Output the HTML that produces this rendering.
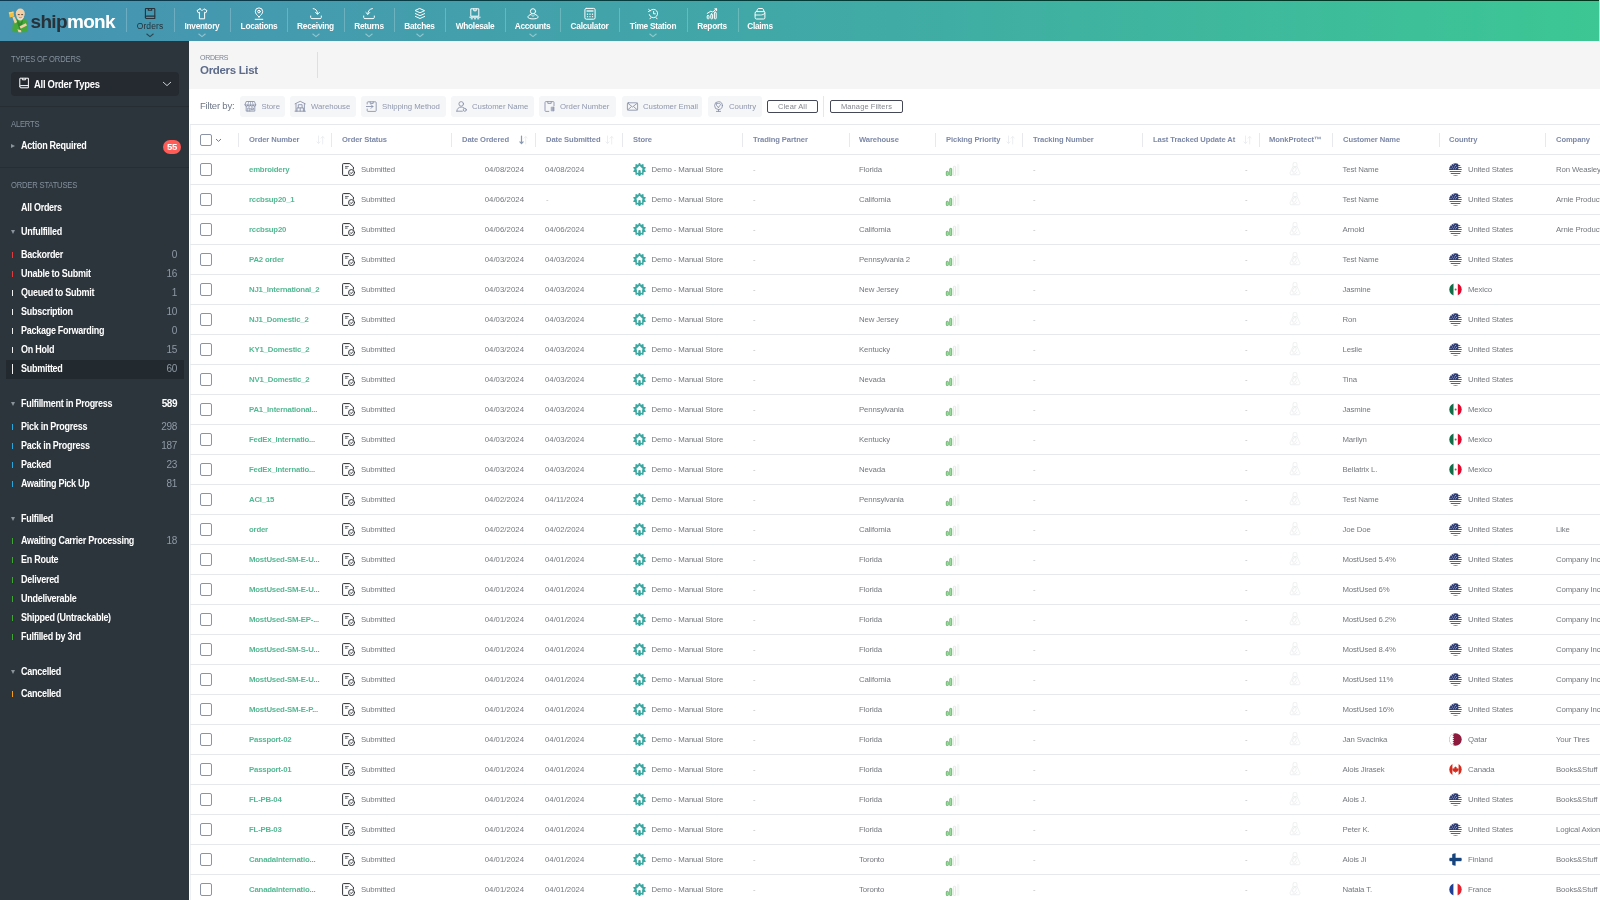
<!DOCTYPE html>
<html lang="en"><head><meta charset="utf-8"><title>Orders List</title>
<style>
*{box-sizing:border-box;margin:0;padding:0}
html,body{width:1600px;height:900px;overflow:hidden;background:#fff;font-family:"Liberation Sans",sans-serif;}
body{position:relative;color:#707478;font-size:8px}
#wrap{position:absolute;left:0;top:0;width:1600px;height:900px;will-change:transform}
.abs{position:absolute}
#nav{position:absolute;left:0;top:0;width:1600px;height:41px;background:linear-gradient(90deg,#4693b2 0%,#40aba5 56%,#3cc794 100%);}
#topline{position:absolute;left:0;top:0;width:1600px;height:1px;background:linear-gradient(90deg,#0e3a52 0%,#003c34 56%,#00371c 100%)}
#navedge{position:absolute;right:0;top:0;width:1px;height:41px;background:#bfe3df}
.nd{position:absolute;top:8px;width:1px;height:24px;background:rgba(255,255,255,.22)}
.ni{position:absolute;top:0;height:41px;text-align:center;color:#fff;font-size:8.3px;font-weight:bold;letter-spacing:-.27px;white-space:nowrap}
.ni .lb{position:absolute;left:0;right:0;top:20px;line-height:12px}
.ni svg.ic{position:absolute;left:50%;top:7px;margin-left:-7px}
.ni svg.ch{position:absolute;left:50%;top:33px;margin-left:-4px}
.ni.act{color:#27323a}
.ni.act .lb{font-weight:normal;letter-spacing:.1px;font-size:8.5px}
#side{position:absolute;left:0;top:41px;width:189px;height:859px;background:#2d353c;color:#fff}

.sh{position:absolute;left:11px;color:#83919e;font-size:8.5px;letter-spacing:-.2px;line-height:10px;white-space:nowrap;transform:scaleX(.895);transform-origin:0 50%}
.sl{position:absolute;left:0;width:189px;height:1px;background:#262d33}
.si{position:absolute;left:21px;font-size:10px;font-weight:bold;letter-spacing:-.3px;line-height:12px;color:#fff;white-space:nowrap;transform:scaleX(.9);transform-origin:0 50%}
.sc{position:absolute;right:1423px;font-size:10px;letter-spacing:-.3px;line-height:12px;color:#8e9aa6;white-space:nowrap;text-align:right}
.sb{position:absolute;left:12px;width:1px;height:8px}
.tri{position:absolute;left:11px;width:0;height:0;border-left:2.5px solid transparent;border-right:2.5px solid transparent;border-top:4px solid #8a949d}
.trir{position:absolute;left:11px;width:0;height:0;border-top:2.5px solid transparent;border-bottom:2.5px solid transparent;border-left:4px solid #8a949d}
#hdr{position:absolute;left:189px;top:41px;width:1411px;height:48px;background:#f5f5f5}
#main{position:absolute;left:189px;top:89px;width:1411px;height:811px;background:#fff}
.hl{position:absolute;left:0;width:1410px;height:1px;background:#e6e9ec}
.th{position:absolute;top:134px;font-size:7.6px;font-weight:bold;color:#7d89a7;line-height:11px;white-space:nowrap;letter-spacing:-.09px}
.vd{position:absolute;top:133px;width:1px;height:14px;background:#e7e9ed}
.cb{position:absolute;left:200px;width:12px;height:12px;border:1px solid #8d93a6;border-radius:2px;background:#fff}
.td{position:absolute;font-size:7.8px;line-height:11px;color:#74787d;white-space:nowrap;letter-spacing:-.13px}
.lk{color:#55b895;font-weight:bold;letter-spacing:-.2px}
.dash{color:#b9bdc2}
.dt{letter-spacing:.03px}
.fb{position:absolute;top:96px;height:21px;background:#f5f6f8;border-radius:3px}
.fb span{position:absolute;top:5px;line-height:11px;font-size:7.8px;color:#9097ae;white-space:nowrap;letter-spacing:-.04px}
.ob{position:absolute;top:100px;height:13px;border:1px solid #444857;border-radius:2px;font-size:7.5px;color:#83868f;text-align:center;line-height:11px;letter-spacing:.1px;background:#fff}
</style></head>
<body>
<div id="wrap">
<div id="nav">
<i class="nd" style="left:126px"></i><i class="nd" style="left:174px"></i><i class="nd" style="left:230px"></i><i class="nd" style="left:287px"></i><i class="nd" style="left:344px"></i><i class="nd" style="left:394px"></i><i class="nd" style="left:445px"></i><i class="nd" style="left:505px"></i><i class="nd" style="left:560px"></i><i class="nd" style="left:619px"></i><i class="nd" style="left:687px"></i><i class="nd" style="left:738px"></i>
<div class="ni act" style="left:120px;width:60px"><svg class="ic" width="14" height="14" viewBox="0 0 14 14" stroke="#27323a" fill="none" stroke-width="1.1" stroke-linecap="round" stroke-linejoin="round"><path d="M3 1.5h8a.8.8 0 0 1 .8.8v9.2H3.6a1.2 1.2 0 0 1-1.2-1.2V2.1a.6.6 0 0 1 .6-.6z"/><path d="M2.4 10.3a1.2 1.2 0 0 1 1.2-1.2h8.2"/><path d="M5.3 1.6v1.6h3.4V1.6"/></svg><span class="lb">Orders</span><svg class="ch" width="8" height="5" viewBox="0 0 8 5" fill="none" stroke="rgba(39,50,58,.8)" stroke-width="1.100" stroke-linecap="round" stroke-linejoin="round"><path d="M.8 1l3.200 2.700L7.200 1"/></svg></div>
<div class="ni" style="left:172px;width:60px"><svg class="ic" width="14" height="14" viewBox="0 0 14 14" stroke="#fff" fill="none" stroke-width="1" stroke-linecap="round" stroke-linejoin="round"><path d="M5 1.8L2 3.6l1.2 2.2 1.2-.6v6.6h5.2V5.2l1.2.6L12 3.6 9 1.8c-.3 1-1.1 1.5-2 1.5s-1.700-.5-2-1.500z"/></svg><span class="lb">Inventory</span><svg class="ch" width="8" height="5" viewBox="0 0 8 5" fill="none" stroke="rgba(255,255,255,.42)" stroke-width="1.100" stroke-linecap="round" stroke-linejoin="round"><path d="M.8 1l3.200 2.700L7.200 1"/></svg></div>
<div class="ni" style="left:229px;width:60px"><svg class="ic" width="14" height="14" viewBox="0 0 14 14" stroke="#fff" fill="none" stroke-width="1" stroke-linecap="round" stroke-linejoin="round"><path d="M7 10C4.800 7.800 3.300 6.400 3.300 4.600a3.700 3.700 0 0 1 7.400 0C10.700 6.400 9.200 7.800 7 10z"/><circle cx="7" cy="4.600" r="1.300"/><path d="M3.200 12.300h7.600"/></svg><span class="lb">Locations</span></div>
<div class="ni" style="left:285.5px;width:60px"><svg class="ic" width="14" height="14" viewBox="0 0 14 14" stroke="#fff" fill="none" stroke-width="1" stroke-linecap="round" stroke-linejoin="round"><path d="M4.200 1.600c2.600.2 4.200 1.900 4.300 5.400"/><path d="M6.600 5.400l1.900 1.900 1.900-1.900"/><path d="M1.700 9v1.400a1.200 1.200 0 0 0 1.200 1.200h8.200a1.200 1.200 0 0 0 1.200-1.200V9"/></svg><span class="lb">Receiving</span><svg class="ch" width="8" height="5" viewBox="0 0 8 5" fill="none" stroke="rgba(255,255,255,.42)" stroke-width="1.100" stroke-linecap="round" stroke-linejoin="round"><path d="M.8 1l3.200 2.700L7.200 1"/></svg></div>
<div class="ni" style="left:339px;width:60px"><svg class="ic" width="14" height="14" viewBox="0 0 14 14" stroke="#fff" fill="none" stroke-width="1" stroke-linecap="round" stroke-linejoin="round"><path d="M10.400 1.600C7.600 1.900 6 3.700 5.800 7.200"/><path d="M3.900 5.500l1.900 1.900 1.900-1.900"/><path d="M1.700 9v1.400a1.200 1.200 0 0 0 1.200 1.200h8.200a1.200 1.200 0 0 0 1.200-1.200V9"/></svg><span class="lb">Returns</span><svg class="ch" width="8" height="5" viewBox="0 0 8 5" fill="none" stroke="rgba(255,255,255,.42)" stroke-width="1.100" stroke-linecap="round" stroke-linejoin="round"><path d="M.8 1l3.200 2.700L7.200 1"/></svg></div>
<div class="ni" style="left:389.5px;width:60px"><svg class="ic" width="14" height="14" viewBox="0 0 14 14" stroke="#fff" fill="none" stroke-width="1" stroke-linecap="round" stroke-linejoin="round"><path d="M7 1.600l4.600 2.100L7 5.800 2.400 3.700z"/><path d="M2.400 6.600L7 8.700l4.600-2.100"/><path d="M2.400 9.400L7 11.500l4.600-2.100"/></svg><span class="lb">Batches</span><svg class="ch" width="8" height="5" viewBox="0 0 8 5" fill="none" stroke="rgba(255,255,255,.42)" stroke-width="1.100" stroke-linecap="round" stroke-linejoin="round"><path d="M.8 1l3.200 2.700L7.200 1"/></svg></div>
<div class="ni" style="left:445px;width:60px"><svg class="ic" width="14" height="14" viewBox="0 0 14 14" stroke="#fff" fill="none" stroke-width="1" stroke-linecap="round" stroke-linejoin="round"><path d="M3.200 1.800h7.600v7.400H3.200z"/><path d="M5.800 1.800v2h2.400v-2"/><path d="M1.800 10.200h10.400"/><path d="M3.200 11.800h1.200M6.400 11.800h1.200M9.600 11.800h1.200"/></svg><span class="lb">Wholesale</span></div>
<div class="ni" style="left:502.5px;width:60px"><svg class="ic" width="14" height="14" viewBox="0 0 14 14" stroke="#fff" fill="none" stroke-width="1" stroke-linecap="round" stroke-linejoin="round"><circle cx="7" cy="4.300" r="2.600"/><path d="M5 7.400C3.300 7.900 1.900 8.900 1.900 10.100c0 1.100 2.300 1.800 5.100 1.800s5.100-.7 5.100-1.800c0-1.200-1.400-2.200-3.100-2.700"/><path d="M5.600 8.200l1.400 1.200 1.400-1.200" stroke-width=".8"/></svg><span class="lb">Accounts</span><svg class="ch" width="8" height="5" viewBox="0 0 8 5" fill="none" stroke="rgba(255,255,255,.42)" stroke-width="1.100" stroke-linecap="round" stroke-linejoin="round"><path d="M.8 1l3.200 2.700L7.200 1"/></svg></div>
<div class="ni" style="left:559.5px;width:60px"><svg class="ic" width="14" height="14" viewBox="0 0 14 14" stroke="#fff" fill="none" stroke-width="1" stroke-linecap="round" stroke-linejoin="round"><rect x="1.900" y="1.400" width="10.200" height="10.800" rx="1.400"/><path d="M4 4h6" stroke-width="1.300" opacity=".85"/><path d="M4.500 6.600v3.600M7 6.600v3.600M9.500 6.600v3.600" stroke-dasharray="1.300 1" stroke-linecap="butt" stroke-width="1.200" opacity=".85"/></svg><span class="lb">Calculator</span></div>
<div class="ni" style="left:623px;width:60px"><svg class="ic" width="14" height="14" viewBox="0 0 14 14" stroke="#fff" fill="none" stroke-width="1" stroke-linecap="round" stroke-linejoin="round"><path d="M4.300 3.600A4.200 4.200 0 1 1 3.300 7.600"/><path d="M2.600 2.400l1.600 1.400-1.900.8" stroke-width=".9"/><path d="M7.600 4.400v2.400h1.700"/><path d="M4.800 10.700l-.8 1.100M10.200 10.700l.8 1.100"/></svg><span class="lb">Time Station</span><svg class="ch" width="8" height="5" viewBox="0 0 8 5" fill="none" stroke="rgba(255,255,255,.42)" stroke-width="1.100" stroke-linecap="round" stroke-linejoin="round"><path d="M.8 1l3.200 2.700L7.200 1"/></svg></div>
<div class="ni" style="left:682px;width:60px"><svg class="ic" width="14" height="14" viewBox="0 0 14 14" stroke="#fff" fill="none" stroke-width="1" stroke-linecap="round" stroke-linejoin="round"><rect x="2.200" y="8.600" width="1.800" height="3.200" rx=".6"/><rect x="5.800" y="7" width="1.800" height="4.800" rx=".6"/><rect x="9.400" y="5.200" width="1.800" height="6.600" rx=".6"/><path d="M2.200 6.400l3.600-2.200 2 .8 3.800-3.200M9.800 1.800h1.800v1.800"/></svg><span class="lb">Reports</span></div>
<div class="ni" style="left:730px;width:60px"><svg class="ic" width="14" height="14" viewBox="0 0 14 14" stroke="#fff" fill="none" stroke-width="1" stroke-linecap="round" stroke-linejoin="round"><path d="M3.600 4.600l.9-2.300c.2-.5.600-.8 1.100-.8h3.600c.5 0 .9.300 1.100.8l.9 2.300"/><path d="M2.100 5.800a1.200 1.200 0 0 1 1.200-1.200h7.400a1.200 1.200 0 0 1 1.200 1.200v5a1.200 1.200 0 0 1-1.200 1.200H3.300a1.200 1.200 0 0 1-1.200-1.200z"/><path d="M11.900 6.200c-1 1.200-2.600 1.800-4.400 1.800H2.200" stroke-width=".9"/></svg><span class="lb">Claims</span></div>
<svg class="abs" style="left:7px;top:7px" width="24" height="27" viewBox="0 0 24 27">
<path d="M6.200 14.200c1.200-1.600 3-2.800 5.400-3l5.600.4c2.200.8 3.600 2.600 3.800 5.200l-.6 6.600c-.4 1.200-1.200 1.800-2.400 1.800H7.600c-1.400-.2-2.200-1-2.400-2.400z" fill="#46a83c"/>
<path d="M9.800 12l3.400 4.400 2.600-4.200c.2 3.800-.8 7.600-2.600 11.200-2-3.400-3.200-7.200-3.400-11.400z" fill="#2f8a2c"/>
<ellipse cx="13.300" cy="6.600" rx="4.500" ry="5" fill="#f3cfa8"/>
<path d="M9.300 8.800c1.200 3 6.800 3 8-.2-.6 3.600-2.400 5-4 5s-3.400-1.400-4-4.800z" fill="#e9dfd2"/>
<path d="M10.800 7.600h1.900M14.200 7.600h1.900" stroke="#4a3a30" stroke-width=".9"/>
<path d="M11.900 10.200c.9.700 2 .7 2.900 0" stroke="#b5705a" stroke-width=".7" fill="none"/>
<path d="M1.800 5.400l4.600-.8.900 5-4.600.9z" fill="#f2bf3e"/><path d="M1.800 5.400l4.600-.8.200 1.200-4.600.9z" fill="#f7d676"/>
<path d="M5.400 10.200l2.200-.5 2.600 5.200-2.400 1.500z" fill="#f3cfa8"/>
<path d="M12.600 19.200l6.200-3 1.200 2.400-6.400 3.200z" fill="#f3cfa8"/>
<path d="M10.400 22.200l3.600 1 .4 2H11.600z" fill="#f3cfa8"/>
</svg>
<div class="abs" style="left:30.500px;top:9px;font-size:19px;line-height:26px;font-weight:bold;letter-spacing:-.66px;color:#27323a;white-space:nowrap">ship<span style="color:#fff">monk</span></div>
<div id="topline"></div><div id="navedge"></div>
</div>
<div id="side"></div>
<div class="sh" style="top:54px">TYPES OF ORDERS</div>
<div class="abs" style="left:11px;top:72px;width:168px;height:24px;border-radius:4px;background:#242a30"></div>
<svg class="abs" style="left:18px;top:77px" width="12" height="13" viewBox="0 0 12 13" fill="none" stroke="#fff" stroke-width="1" stroke-linejoin="round"><path d="M2 1.200h8.400v9.600H2.900A1.100 1.100 0 0 1 1.800 9.700V1.400z"/><path d="M1.800 9.700a1.100 1.100 0 0 1 1.100-1.100h7.500"/><path d="M4.400 1.300v1.500h3.200V1.300"/></svg>
<div class="si" style="left:34px;top:78px;font-size:10.500px">All Order Types</div>
<svg class="abs" style="left:162px;top:81px" width="10" height="6" viewBox="0 0 10 6" fill="none" stroke="#c9d0d6" stroke-width="1"><path d="M1 1l4 3.600L9 1"/></svg>
<div class="sl" style="top:106px"></div>
<div class="sh" style="top:119px">ALERTS</div>
<i class="trir" style="top:144px"></i><div class="si" style="top:140px">Action Required</div>
<div class="abs" style="left:163px;top:140px;width:18px;height:14px;border-radius:7px;background:#ff5b57;color:#fff;font-size:9.500px;font-weight:bold;text-align:center;line-height:14px;letter-spacing:-.3px">55</div>
<div class="sl" style="top:167px"></div>
<div class="sh" style="top:180px">ORDER STATUSES</div>
<div class="si" style="top:202px">All Orders</div>
<i class="tri" style="top:230px"></i><div class="si" style="top:226px">Unfulfilled</div>
<i class="sb" style="top:252px;height:6px;background:#e0393e"></i><div class="si" style="top:249px">Backorder</div><div class="sc" style="top:249px">0</div>
<i class="sb" style="top:271px;height:6px;background:#e0393e"></i><div class="si" style="top:268px">Unable to Submit</div><div class="sc" style="top:268px">16</div>
<i class="sb" style="top:290px;height:6px;background:#f2f3f4"></i><div class="si" style="top:287px">Queued to Submit</div><div class="sc" style="top:287px">1</div>
<i class="sb" style="top:309px;height:6px;background:#f2f3f4"></i><div class="si" style="top:306px">Subscription</div><div class="sc" style="top:306px">10</div>
<i class="sb" style="top:328px;height:6px;background:#f2f3f4"></i><div class="si" style="top:325px">Package Forwarding</div><div class="sc" style="top:325px">0</div>
<i class="sb" style="top:347px;height:6px;background:#f2f3f4"></i><div class="si" style="top:344px">On Hold</div><div class="sc" style="top:344px">15</div>
<div class="abs" style="left:6px;top:360px;width:178px;height:19px;background:#232a2f"></div><i class="sb" style="top:364px;height:10px;background:#f2f3f4"></i><div class="si" style="top:363px">Submitted</div><div class="sc" style="top:363px">60</div>
<i class="tri" style="top:402px"></i><div class="si" style="top:398px">Fulfillment in Progress</div><div class="sc" style="top:398px;color:#fff;font-weight:bold;letter-spacing:-.5px">589</div>
<i class="sb" style="top:424px;height:6px;background:#2aa6dd"></i><div class="si" style="top:421px">Pick in Progress</div><div class="sc" style="top:421px">298</div>
<i class="sb" style="top:443px;height:6px;background:#2aa6dd"></i><div class="si" style="top:440px">Pack in Progress</div><div class="sc" style="top:440px">187</div>
<i class="sb" style="top:462px;height:6px;background:#2aa6dd"></i><div class="si" style="top:459px">Packed</div><div class="sc" style="top:459px">23</div>
<i class="sb" style="top:481px;height:6px;background:#2aa6dd"></i><div class="si" style="top:478px">Awaiting Pick Up</div><div class="sc" style="top:478px">81</div>
<i class="tri" style="top:517px"></i><div class="si" style="top:513px">Fulfilled</div>
<i class="sb" style="top:538px;height:6px;background:#3fa535"></i><div class="si" style="top:535px">Awaiting Carrier Processing</div><div class="sc" style="top:535px">18</div>
<i class="sb" style="top:557px;height:6px;background:#3fa535"></i><div class="si" style="top:554px">En Route</div>
<i class="sb" style="top:577px;height:6px;background:#3fa535"></i><div class="si" style="top:574px">Delivered</div>
<i class="sb" style="top:596px;height:6px;background:#3fa535"></i><div class="si" style="top:593px">Undeliverable</div>
<i class="sb" style="top:615px;height:6px;background:#3fa535"></i><div class="si" style="top:612px">Shipped (Untrackable)</div>
<i class="sb" style="top:634px;height:6px;background:#3fa535"></i><div class="si" style="top:631px">Fulfilled by 3rd</div>
<i class="tri" style="top:670px"></i><div class="si" style="top:666px">Cancelled</div>
<i class="sb" style="top:691px;height:6px;background:#f59c1a"></i><div class="si" style="top:688px">Cancelled</div>
<div id="hdr"></div><div id="main"></div>
<div class="abs" style="left:200px;top:53px;font-size:7px;line-height:9px;color:#7a8291;letter-spacing:-.3px">ORDERS</div>
<div class="abs" style="left:200px;top:63px;font-size:11.500px;line-height:15px;font-weight:bold;color:#5d6b8a;letter-spacing:-.32px;white-space:nowrap">Orders List</div>
<div class="abs" style="left:317px;top:52px;width:1px;height:26px;background:#dcdfe3"></div>
<div class="abs" style="left:200px;top:100px;font-size:9.500px;line-height:12px;color:#6e7687;letter-spacing:-.2px;white-space:nowrap">Filter by:</div>
<div class="fb" style="left:240px;width:45px"><svg class="abs" style="left:4px;top:4px" width="13" height="13" viewBox="0 0 13 13" fill="none" stroke="#868fa9" stroke-width=".85" stroke-linecap="round" stroke-linejoin="round"><path d="M2.600 1.500h7.800l1.400 3.500H1.200z"/><path d="M1.200 5a1.320 1.320 0 0 0 2.650 0 1.320 1.320 0 0 0 2.650 0 1.320 1.320 0 0 0 2.650 0 1.320 1.320 0 0 0 2.650 0"/><path d="M4.700 1.600L3.850 5M6.500 1.600V5M8.300 1.600L9.150 5" stroke-width=".6"/><path d="M2.200 6.400v4.700h8.600V6.400"/><path d="M3.800 11.100V8h2v3.100M7.400 8h2v1.700h-2z"/></svg><span style="left:21.5px">Store</span></div>
<div class="fb" style="left:290px;width:66px"><svg class="abs" style="left:4px;top:4px" width="13" height="13" viewBox="0 0 13 13" fill="none" stroke="#868fa9" stroke-width=".85" stroke-linecap="round" stroke-linejoin="round"><path d="M1.100 3.800L6.200 1.300l5.100 2.500"/><path d="M2 3.800v7.300M10.400 3.800v7.300"/><path d="M1 11.200h10.400"/><path d="M4.300 7.700V4.700h3.800v3M3 11.100V7.900h6.400v3.200M6.200 7.900v3.200"/></svg><span style="left:21px">Warehouse</span></div>
<div class="fb" style="left:361px;width:85px"><svg class="abs" style="left:4px;top:4px" width="13" height="13" viewBox="0 0 13 13" fill="none" stroke="#868fa9" stroke-width=".85" stroke-linecap="round" stroke-linejoin="round"><path d="M2.200 4V2.600a.8.800 0 0 1 .8-.8h7.400a.8.800 0 0 1 .8.800v8a.8.800 0 0 1-.8.800H3a.8.800 0 0 1-.8-.8V9"/><path d="M1.400 6.500h6.400M6 4.600l1.900 1.900L6 8.400"/><path d="M5.200 1.900v1.500h3V1.900"/></svg><span style="left:21px">Shipping Method</span></div>
<div class="fb" style="left:451px;width:83px"><svg class="abs" style="left:4px;top:4px" width="13" height="13" viewBox="0 0 13 13" fill="none" stroke="#868fa9" stroke-width=".85" stroke-linecap="round" stroke-linejoin="round"><circle cx="6.200" cy="3.900" r="2.300"/><path d="M1.800 11.200c.2-2.600 1.800-4.100 4.400-4.100 1 0 1.900.2 2.600.7"/><path d="M1.800 11.200h5.600"/><circle cx="9.800" cy="9.800" r="1.500"/></svg><span style="left:21px">Customer Name</span></div>
<div class="fb" style="left:539px;width:77px"><svg class="abs" style="left:4px;top:4px" width="13" height="13" viewBox="0 0 13 13" fill="none" stroke="#868fa9" stroke-width=".85" stroke-linecap="round" stroke-linejoin="round"><path d="M5.800 11.400H2.800a.8.800 0 0 1-.8-.8V2.400a.8.800 0 0 1 .8-.8h7.400a.8.800 0 0 1 .8.800v3.400"/><path d="M4.800 1.700v1.700h3.400V1.700"/><path d="M8 8h3.400M8 10h3.400M9 7v4M10.400 7v4"/></svg><span style="left:21px">Order Number</span></div>
<div class="fb" style="left:622px;width:80px"><svg class="abs" style="left:4px;top:4px" width="13" height="13" viewBox="0 0 13 13" fill="none" stroke="#868fa9" stroke-width=".85" stroke-linecap="round" stroke-linejoin="round"><rect x="1.400" y="2.800" width="10.200" height="7.400" rx="1"/><path d="M1.800 3.200l4.700 3.800 4.700-3.800M1.800 9.800l3.400-3M11.200 9.800l-3.400-3"/></svg><span style="left:21px">Customer Email</span></div>
<div class="fb" style="left:708px;width:54px"><svg class="abs" style="left:4px;top:4px" width="13" height="13" viewBox="0 0 13 13" fill="none" stroke="#868fa9" stroke-width=".85" stroke-linecap="round" stroke-linejoin="round"><circle cx="6.500" cy="5.600" r="3.900"/><path d="M4.600 3.800c1-.6 2.800-.6 3.800.2.600.8-.2 1.600-1 2-.6.400-.6 1.200-.9 1.800-.5-.4-.7-1.200-1.300-1.600-.6-.400-1.100-1.500-.6-2.400z"/><path d="M6.500 9.500v1.700M4.400 11.400h4.200"/></svg><span style="left:21px">Country</span></div>
<div class="ob" style="left:767px;width:51px">Clear All</div>
<div class="abs" style="left:823px;top:96px;width:1px;height:21px;background:#e4e7eb"></div>
<div class="ob" style="left:830px;width:73px">Manage Filters</div>
<div class="abs" style="left:190px;top:124px;width:1px;height:776px;background:#eef0f3"></div><div class="hl" style="left:190px;top:124px"></div>
<div class="cb" style="top:134px"></div>
<svg class="abs" style="left:215px;top:138px" width="7" height="5" viewBox="0 0 7 5" fill="none" stroke="#6f7a99" stroke-width="1"><path d="M1 1l2.500 2.400L6 1"/></svg>
<i class="vd" style="left:238px"></i><i class="vd" style="left:331px"></i><i class="vd" style="left:451px"></i><i class="vd" style="left:535px"></i><i class="vd" style="left:622px"></i><i class="vd" style="left:742px"></i><i class="vd" style="left:849px"></i><i class="vd" style="left:935px"></i><i class="vd" style="left:1022px"></i><i class="vd" style="left:1142px"></i><i class="vd" style="left:1259px"></i><i class="vd" style="left:1332px"></i><i class="vd" style="left:1439px"></i><i class="vd" style="left:1545px"></i>
<div class="th" style="left:249px">Order Number</div><svg class="abs" style="left:316px;top:135px" width="9" height="10" viewBox="0 0 9 10" fill="none" stroke-linecap="round" stroke-linejoin="round"><path d="M2.500 1v7.500M.9 6.900l1.600 1.600 1.600-1.600" stroke="#eceef1" stroke-width="1"/><path d="M6.700 9V1.500M5.100 3.100l1.600-1.600 1.600 1.600" stroke="#eceef1" stroke-width="1"/></svg>
<div class="th" style="left:342px">Order Status</div>
<div class="th" style="left:462px">Date Ordered</div><svg class="abs" style="left:518.5px;top:135px" width="9" height="10" viewBox="0 0 9 10" fill="none" stroke-linecap="round" stroke-linejoin="round"><path d="M2.500 1v7.500M.9 6.900l1.600 1.600 1.600-1.600" stroke="#8a9ab3" stroke-width="1.200"/><path d="M6.700 9V1.500M5.100 3.100l1.600-1.600 1.600 1.600" stroke="#eceef1" stroke-width="1"/></svg>
<div class="th" style="left:546px">Date Submitted</div><svg class="abs" style="left:605px;top:135px" width="9" height="10" viewBox="0 0 9 10" fill="none" stroke-linecap="round" stroke-linejoin="round"><path d="M2.500 1v7.500M.9 6.900l1.600 1.600 1.600-1.600" stroke="#eceef1" stroke-width="1"/><path d="M6.700 9V1.500M5.100 3.100l1.600-1.600 1.600 1.600" stroke="#eceef1" stroke-width="1"/></svg>
<div class="th" style="left:633px">Store</div>
<div class="th" style="left:753px">Trading Partner</div>
<div class="th" style="left:859px">Warehouse</div>
<div class="th" style="left:946px">Picking Priority</div><svg class="abs" style="left:1006px;top:135px" width="9" height="10" viewBox="0 0 9 10" fill="none" stroke-linecap="round" stroke-linejoin="round"><path d="M2.500 1v7.500M.9 6.900l1.600 1.600 1.600-1.600" stroke="#eceef1" stroke-width="1"/><path d="M6.700 9V1.500M5.100 3.100l1.600-1.600 1.600 1.600" stroke="#eceef1" stroke-width="1"/></svg>
<div class="th" style="left:1033px">Tracking Number</div>
<div class="th" style="left:1153px">Last Tracked Update At</div><svg class="abs" style="left:1243px;top:135px" width="9" height="10" viewBox="0 0 9 10" fill="none" stroke-linecap="round" stroke-linejoin="round"><path d="M2.500 1v7.500M.9 6.900l1.600 1.600 1.600-1.600" stroke="#eceef1" stroke-width="1"/><path d="M6.700 9V1.500M5.100 3.100l1.600-1.600 1.600 1.600" stroke="#eceef1" stroke-width="1"/></svg>
<div class="th" style="left:1269px">MonkProtect™</div>
<div class="th" style="left:1343px">Customer Name</div>
<div class="th" style="left:1449px">Country</div>
<div class="th" style="left:1556px">Company</div>
<div class="hl" style="left:190px;top:154px"></div>
<svg width="0" height="0" style="position:absolute"><defs>
<clipPath id="fc"><circle cx="6.500" cy="6.500" r="6.200"/></clipPath>
<symbol id="st" viewBox="0 0 13 13"><g fill="none" stroke="#2d3035" stroke-width="1" stroke-linejoin="round" stroke-linecap="round"><path d="M5.600 12.400H1.500a.9.900 0 0 1-.9-.9V1.500a.9.900 0 0 1 .9-.9h6.300l3.600 3.400v2.200"/><circle cx="9.500" cy="9.600" r="3" fill="#fff" stroke-width="1"/><path d="M8.300 9.700l.9.900 1.500-1.700" stroke-width=".95"/></g><path d="M3 3.500h3.800M3 5.100h2.600" stroke="#75797f" stroke-width="1.100" fill="none"/></symbol>
<symbol id="gear" viewBox="0 0 13 13"><path d="M5.85 0.03L7.15 0.03L7.60 1.42L8.60 1.74L9.77 0.88L10.83 1.65L10.38 3.04L10.99 3.88L12.45 3.88L12.85 5.12L11.67 5.98L11.67 7.02L12.85 7.88L12.45 9.12L10.99 9.12L10.38 9.96L10.83 11.35L9.77 12.12L8.60 11.26L7.60 11.58L7.15 12.97L5.85 12.97L5.40 11.58L4.40 11.26L3.23 12.12L2.17 11.35L2.62 9.96L2.01 9.12L0.55 9.12L0.15 7.88L1.33 7.02L1.33 5.98L0.15 5.12L0.55 3.88L2.01 3.88L2.62 3.04L2.17 1.65L3.23 0.88L4.40 1.74L5.40 1.42z" fill="#3aa8a2"/><path d="M6.500 2.700L2.900 6.300h1v3.400h5.200V6.300h1z" fill="#fff"/><rect x="5.300" y="6.900" width="2.400" height="5.600" rx="1" fill="#3aa8a2"/></symbol>
<symbol id="pp" viewBox="0 0 15 13"><rect x="1.300" y="8.300" width="2" height="4.300" rx=".7" fill="#a9e3ac" stroke="#45a24b" stroke-width=".7"/><rect x="4.700" y="5.400" width="2" height="7.200" rx=".7" fill="#a9e3ac" stroke="#45a24b" stroke-width=".7"/><rect x="8.400" y="3.300" width="2.200" height="9.300" rx=".8" fill="#fbfbfb" stroke="#dcdfe0" stroke-width=".7"/><rect x="12.300" y="1.300" width="1.800" height="11.300" rx=".6" fill="#f6f7f7" stroke="#f1f3f3" stroke-width=".5"/></symbol>
<symbol id="mk" viewBox="0 0 12 14"><g fill="none" stroke="#eceeef" stroke-width=".9" stroke-linejoin="round"><path d="M4 4.500V2.200a2 2 0 0 1 4 0v2.300"/><path d="M4 4.500C2.800 6.500 2.400 9 .8 11l1 1.800h8.400l1-1.800C9.600 9 9.200 6.500 8 4.500z"/><ellipse cx="5.400" cy="7.800" rx="1.500" ry="2.600" transform="rotate(25 5.400 7.800)"/><path d="M3.600 11.400c1.600 1.200 3.400.6 4.600-1.800"/></g></symbol>
<symbol id="us" viewBox="0 0 13 13"><g clip-path="url(#fc)"><rect width="13" height="13" fill="#fff"/><path d="M0 2.500h13M0 4.500h13M0 6.500h13M0 8.500h13M0 10.500h13M0 12.500h13" stroke="#c23b3b" stroke-width="1"/><rect width="9.300" height="7" fill="#2f3d75"/><path d="M2.500 2.500h.01M4.500 1.500h.01M6.500 2.500h.01M3.500 4h.01M5.500 4h.01M7.500 4.500h.01M2 5.500h.01M4.500 5.800h.01M6.500 5.800h.01" stroke="#c9cfe6" stroke-width=".8" stroke-linecap="round"/></g></symbol>
<symbol id="mx" viewBox="0 0 13 13"><g clip-path="url(#fc)"><rect width="13" height="13" fill="#fff"/><rect width="4.500" height="13" fill="#116c48"/><rect x="8.800" width="4.200" height="13" fill="#e0062c"/><circle cx="6.600" cy="6.500" r="1" fill="#8a6a3a"/></g></symbol>
<symbol id="qa" viewBox="0 0 13 13"><g clip-path="url(#fc)"><rect width="13" height="13" fill="#8d1b3d"/><path d="M0 0h3.500l1.700 1.080-1.700 1.080 1.700 1.080-1.700 1.080 1.700 1.080-1.700 1.080 1.700 1.080-1.700 1.080 1.700 1.080-1.700 1.080 1.700 1.080-1.700 1.080H0z" fill="#fff"/></g></symbol>
<symbol id="ca" viewBox="0 0 13 13"><g clip-path="url(#fc)"><rect width="13" height="13" fill="#fff"/><rect width="3.400" height="13" fill="#d52b1e"/><rect x="9.600" width="3.400" height="13" fill="#d52b1e"/><path d="M6.500 3.200l.7 1.300.8-.3-.3 1.700 1-.8.200.6 1-.2-.5 1.200.4.300-1.500 1.200.2.700-1.700-.2v1.300h-.6V8.700l-1.700.2.200-.7-1.500-1.200.4-.3-.5-1.200 1 .2.200-.6 1 .8-.3-1.700.8.300z" fill="#d52b1e"/></g></symbol>
<symbol id="fi" viewBox="0 0 13 13"><g clip-path="url(#fc)"><rect width="13" height="13" fill="#fff"/><rect x="3.200" width="3.400" height="13" fill="#18447e"/><rect y="4.800" width="13" height="3.400" fill="#18447e"/></g></symbol>
<symbol id="fr" viewBox="0 0 13 13"><g clip-path="url(#fc)"><rect width="13" height="13" fill="#fff"/><rect width="4.400" height="13" fill="#1e3f94"/><rect x="8.600" width="4.400" height="13" fill="#e1212e"/></g></symbol>
</defs></svg>
<div class="cb" style="top:163px;height:13px"></div><div class="td lk" style="left:249px;top:164px">embroidery</div><svg class="abs" style="left:342px;top:163px" width="13" height="13"><use href="#st"/></svg><div class="td" style="left:361px;top:164px">Submitted</div><div class="td dt" style="right:1076px;top:164px">04/08/2024</div><div class="td dt" style="left:545px;top:164px">04/08/2024</div><svg class="abs" style="left:633px;top:163px" width="13" height="13"><use href="#gear"/></svg><div class="td" style="left:651.500px;top:164px">Demo - Manual Store</div><div class="td dash" style="left:753px;top:164px">-</div><div class="td" style="left:859px;top:164px">Florida</div><svg class="abs" style="left:945px;top:163px" width="15" height="13"><use href="#pp"/></svg><div class="td dash" style="left:1033px;top:164px">-</div><div class="td dash" style="left:1245px;top:164px">-</div><svg class="abs" style="left:1288.500px;top:161.5px" width="12" height="14"><use href="#mk"/></svg><div class="td" style="left:1342.500px;top:164px">Test Name</div><svg class="abs" style="left:1449px;top:163px" width="13" height="13"><use href="#us"/></svg><div class="td" style="left:1468px;top:164px">United States</div><div class="td" style="left:1556px;top:164px">Ron Weasley</div><div class="hl" style="left:190px;top:184px"></div>
<div class="cb" style="top:193px;height:13px"></div><div class="td lk" style="left:249px;top:194px">rccbsup20_1</div><svg class="abs" style="left:342px;top:193px" width="13" height="13"><use href="#st"/></svg><div class="td" style="left:361px;top:194px">Submitted</div><div class="td dt" style="right:1076px;top:194px">04/06/2024</div><div class="td dash" style="left:546px;top:194px">-</div><svg class="abs" style="left:633px;top:193px" width="13" height="13"><use href="#gear"/></svg><div class="td" style="left:651.500px;top:194px">Demo - Manual Store</div><div class="td dash" style="left:753px;top:194px">-</div><div class="td" style="left:859px;top:194px">California</div><svg class="abs" style="left:945px;top:193px" width="15" height="13"><use href="#pp"/></svg><div class="td dash" style="left:1033px;top:194px">-</div><div class="td dash" style="left:1245px;top:194px">-</div><svg class="abs" style="left:1288.500px;top:191.5px" width="12" height="14"><use href="#mk"/></svg><div class="td" style="left:1342.500px;top:194px">Test Name</div><svg class="abs" style="left:1449px;top:193px" width="13" height="13"><use href="#us"/></svg><div class="td" style="left:1468px;top:194px">United States</div><div class="td" style="left:1556px;top:194px">Arnie Products</div><div class="hl" style="left:190px;top:214px"></div>
<div class="cb" style="top:223px;height:13px"></div><div class="td lk" style="left:249px;top:224px">rccbsup20</div><svg class="abs" style="left:342px;top:223px" width="13" height="13"><use href="#st"/></svg><div class="td" style="left:361px;top:224px">Submitted</div><div class="td dt" style="right:1076px;top:224px">04/06/2024</div><div class="td dt" style="left:545px;top:224px">04/06/2024</div><svg class="abs" style="left:633px;top:223px" width="13" height="13"><use href="#gear"/></svg><div class="td" style="left:651.500px;top:224px">Demo - Manual Store</div><div class="td dash" style="left:753px;top:224px">-</div><div class="td" style="left:859px;top:224px">California</div><svg class="abs" style="left:945px;top:223px" width="15" height="13"><use href="#pp"/></svg><div class="td dash" style="left:1033px;top:224px">-</div><div class="td dash" style="left:1245px;top:224px">-</div><svg class="abs" style="left:1288.500px;top:221.5px" width="12" height="14"><use href="#mk"/></svg><div class="td" style="left:1342.500px;top:224px">Arnold</div><svg class="abs" style="left:1449px;top:223px" width="13" height="13"><use href="#us"/></svg><div class="td" style="left:1468px;top:224px">United States</div><div class="td" style="left:1556px;top:224px">Arnie Products</div><div class="hl" style="left:190px;top:244px"></div>
<div class="cb" style="top:253px;height:13px"></div><div class="td lk" style="left:249px;top:254px">PA2 order</div><svg class="abs" style="left:342px;top:253px" width="13" height="13"><use href="#st"/></svg><div class="td" style="left:361px;top:254px">Submitted</div><div class="td dt" style="right:1076px;top:254px">04/03/2024</div><div class="td dt" style="left:545px;top:254px">04/03/2024</div><svg class="abs" style="left:633px;top:253px" width="13" height="13"><use href="#gear"/></svg><div class="td" style="left:651.500px;top:254px">Demo - Manual Store</div><div class="td dash" style="left:753px;top:254px">-</div><div class="td" style="left:859px;top:254px">Pennsylvania 2</div><svg class="abs" style="left:945px;top:253px" width="15" height="13"><use href="#pp"/></svg><div class="td dash" style="left:1033px;top:254px">-</div><div class="td dash" style="left:1245px;top:254px">-</div><svg class="abs" style="left:1288.500px;top:251.5px" width="12" height="14"><use href="#mk"/></svg><div class="td" style="left:1342.500px;top:254px">Test Name</div><svg class="abs" style="left:1449px;top:253px" width="13" height="13"><use href="#us"/></svg><div class="td" style="left:1468px;top:254px">United States</div><div class="hl" style="left:190px;top:274px"></div>
<div class="cb" style="top:283px;height:13px"></div><div class="td lk" style="left:249px;top:284px">NJ1_International_2</div><svg class="abs" style="left:342px;top:283px" width="13" height="13"><use href="#st"/></svg><div class="td" style="left:361px;top:284px">Submitted</div><div class="td dt" style="right:1076px;top:284px">04/03/2024</div><div class="td dt" style="left:545px;top:284px">04/03/2024</div><svg class="abs" style="left:633px;top:283px" width="13" height="13"><use href="#gear"/></svg><div class="td" style="left:651.500px;top:284px">Demo - Manual Store</div><div class="td dash" style="left:753px;top:284px">-</div><div class="td" style="left:859px;top:284px">New Jersey</div><svg class="abs" style="left:945px;top:283px" width="15" height="13"><use href="#pp"/></svg><div class="td dash" style="left:1033px;top:284px">-</div><div class="td dash" style="left:1245px;top:284px">-</div><svg class="abs" style="left:1288.500px;top:281.5px" width="12" height="14"><use href="#mk"/></svg><div class="td" style="left:1342.500px;top:284px">Jasmine</div><svg class="abs" style="left:1449px;top:283px" width="13" height="13"><use href="#mx"/></svg><div class="td" style="left:1468px;top:284px">Mexico</div><div class="hl" style="left:190px;top:304px"></div>
<div class="cb" style="top:313px;height:13px"></div><div class="td lk" style="left:249px;top:314px">NJ1_Domestic_2</div><svg class="abs" style="left:342px;top:313px" width="13" height="13"><use href="#st"/></svg><div class="td" style="left:361px;top:314px">Submitted</div><div class="td dt" style="right:1076px;top:314px">04/03/2024</div><div class="td dt" style="left:545px;top:314px">04/03/2024</div><svg class="abs" style="left:633px;top:313px" width="13" height="13"><use href="#gear"/></svg><div class="td" style="left:651.500px;top:314px">Demo - Manual Store</div><div class="td dash" style="left:753px;top:314px">-</div><div class="td" style="left:859px;top:314px">New Jersey</div><svg class="abs" style="left:945px;top:313px" width="15" height="13"><use href="#pp"/></svg><div class="td dash" style="left:1033px;top:314px">-</div><div class="td dash" style="left:1245px;top:314px">-</div><svg class="abs" style="left:1288.500px;top:311.5px" width="12" height="14"><use href="#mk"/></svg><div class="td" style="left:1342.500px;top:314px">Ron</div><svg class="abs" style="left:1449px;top:313px" width="13" height="13"><use href="#us"/></svg><div class="td" style="left:1468px;top:314px">United States</div><div class="hl" style="left:190px;top:334px"></div>
<div class="cb" style="top:343px;height:13px"></div><div class="td lk" style="left:249px;top:344px">KY1_Domestic_2</div><svg class="abs" style="left:342px;top:343px" width="13" height="13"><use href="#st"/></svg><div class="td" style="left:361px;top:344px">Submitted</div><div class="td dt" style="right:1076px;top:344px">04/03/2024</div><div class="td dt" style="left:545px;top:344px">04/03/2024</div><svg class="abs" style="left:633px;top:343px" width="13" height="13"><use href="#gear"/></svg><div class="td" style="left:651.500px;top:344px">Demo - Manual Store</div><div class="td dash" style="left:753px;top:344px">-</div><div class="td" style="left:859px;top:344px">Kentucky</div><svg class="abs" style="left:945px;top:343px" width="15" height="13"><use href="#pp"/></svg><div class="td dash" style="left:1033px;top:344px">-</div><div class="td dash" style="left:1245px;top:344px">-</div><svg class="abs" style="left:1288.500px;top:341.5px" width="12" height="14"><use href="#mk"/></svg><div class="td" style="left:1342.500px;top:344px">Leslie</div><svg class="abs" style="left:1449px;top:343px" width="13" height="13"><use href="#us"/></svg><div class="td" style="left:1468px;top:344px">United States</div><div class="hl" style="left:190px;top:364px"></div>
<div class="cb" style="top:373px;height:13px"></div><div class="td lk" style="left:249px;top:374px">NV1_Domestic_2</div><svg class="abs" style="left:342px;top:373px" width="13" height="13"><use href="#st"/></svg><div class="td" style="left:361px;top:374px">Submitted</div><div class="td dt" style="right:1076px;top:374px">04/03/2024</div><div class="td dt" style="left:545px;top:374px">04/03/2024</div><svg class="abs" style="left:633px;top:373px" width="13" height="13"><use href="#gear"/></svg><div class="td" style="left:651.500px;top:374px">Demo - Manual Store</div><div class="td dash" style="left:753px;top:374px">-</div><div class="td" style="left:859px;top:374px">Nevada</div><svg class="abs" style="left:945px;top:373px" width="15" height="13"><use href="#pp"/></svg><div class="td dash" style="left:1033px;top:374px">-</div><div class="td dash" style="left:1245px;top:374px">-</div><svg class="abs" style="left:1288.500px;top:371.5px" width="12" height="14"><use href="#mk"/></svg><div class="td" style="left:1342.500px;top:374px">Tina</div><svg class="abs" style="left:1449px;top:373px" width="13" height="13"><use href="#us"/></svg><div class="td" style="left:1468px;top:374px">United States</div><div class="hl" style="left:190px;top:394px"></div>
<div class="cb" style="top:403px;height:13px"></div><div class="td lk" style="left:249px;top:404px">PA1_International...</div><svg class="abs" style="left:342px;top:403px" width="13" height="13"><use href="#st"/></svg><div class="td" style="left:361px;top:404px">Submitted</div><div class="td dt" style="right:1076px;top:404px">04/03/2024</div><div class="td dt" style="left:545px;top:404px">04/03/2024</div><svg class="abs" style="left:633px;top:403px" width="13" height="13"><use href="#gear"/></svg><div class="td" style="left:651.500px;top:404px">Demo - Manual Store</div><div class="td dash" style="left:753px;top:404px">-</div><div class="td" style="left:859px;top:404px">Pennsylvania</div><svg class="abs" style="left:945px;top:403px" width="15" height="13"><use href="#pp"/></svg><div class="td dash" style="left:1033px;top:404px">-</div><div class="td dash" style="left:1245px;top:404px">-</div><svg class="abs" style="left:1288.500px;top:401.5px" width="12" height="14"><use href="#mk"/></svg><div class="td" style="left:1342.500px;top:404px">Jasmine</div><svg class="abs" style="left:1449px;top:403px" width="13" height="13"><use href="#mx"/></svg><div class="td" style="left:1468px;top:404px">Mexico</div><div class="hl" style="left:190px;top:424px"></div>
<div class="cb" style="top:433px;height:13px"></div><div class="td lk" style="left:249px;top:434px">FedEx_Internatio...</div><svg class="abs" style="left:342px;top:433px" width="13" height="13"><use href="#st"/></svg><div class="td" style="left:361px;top:434px">Submitted</div><div class="td dt" style="right:1076px;top:434px">04/03/2024</div><div class="td dt" style="left:545px;top:434px">04/03/2024</div><svg class="abs" style="left:633px;top:433px" width="13" height="13"><use href="#gear"/></svg><div class="td" style="left:651.500px;top:434px">Demo - Manual Store</div><div class="td dash" style="left:753px;top:434px">-</div><div class="td" style="left:859px;top:434px">Kentucky</div><svg class="abs" style="left:945px;top:433px" width="15" height="13"><use href="#pp"/></svg><div class="td dash" style="left:1033px;top:434px">-</div><div class="td dash" style="left:1245px;top:434px">-</div><svg class="abs" style="left:1288.500px;top:431.5px" width="12" height="14"><use href="#mk"/></svg><div class="td" style="left:1342.500px;top:434px">Marilyn</div><svg class="abs" style="left:1449px;top:433px" width="13" height="13"><use href="#mx"/></svg><div class="td" style="left:1468px;top:434px">Mexico</div><div class="hl" style="left:190px;top:454px"></div>
<div class="cb" style="top:463px;height:13px"></div><div class="td lk" style="left:249px;top:464px">FedEx_Internatio...</div><svg class="abs" style="left:342px;top:463px" width="13" height="13"><use href="#st"/></svg><div class="td" style="left:361px;top:464px">Submitted</div><div class="td dt" style="right:1076px;top:464px">04/03/2024</div><div class="td dt" style="left:545px;top:464px">04/03/2024</div><svg class="abs" style="left:633px;top:463px" width="13" height="13"><use href="#gear"/></svg><div class="td" style="left:651.500px;top:464px">Demo - Manual Store</div><div class="td dash" style="left:753px;top:464px">-</div><div class="td" style="left:859px;top:464px">Nevada</div><svg class="abs" style="left:945px;top:463px" width="15" height="13"><use href="#pp"/></svg><div class="td dash" style="left:1033px;top:464px">-</div><div class="td dash" style="left:1245px;top:464px">-</div><svg class="abs" style="left:1288.500px;top:461.5px" width="12" height="14"><use href="#mk"/></svg><div class="td" style="left:1342.500px;top:464px">Bellatrix L.</div><svg class="abs" style="left:1449px;top:463px" width="13" height="13"><use href="#mx"/></svg><div class="td" style="left:1468px;top:464px">Mexico</div><div class="hl" style="left:190px;top:484px"></div>
<div class="cb" style="top:493px;height:13px"></div><div class="td lk" style="left:249px;top:494px">ACI_15</div><svg class="abs" style="left:342px;top:493px" width="13" height="13"><use href="#st"/></svg><div class="td" style="left:361px;top:494px">Submitted</div><div class="td dt" style="right:1076px;top:494px">04/02/2024</div><div class="td dt" style="left:545px;top:494px">04/11/2024</div><svg class="abs" style="left:633px;top:493px" width="13" height="13"><use href="#gear"/></svg><div class="td" style="left:651.500px;top:494px">Demo - Manual Store</div><div class="td dash" style="left:753px;top:494px">-</div><div class="td" style="left:859px;top:494px">Pennsylvania</div><svg class="abs" style="left:945px;top:493px" width="15" height="13"><use href="#pp"/></svg><div class="td dash" style="left:1033px;top:494px">-</div><div class="td dash" style="left:1245px;top:494px">-</div><svg class="abs" style="left:1288.500px;top:491.5px" width="12" height="14"><use href="#mk"/></svg><div class="td" style="left:1342.500px;top:494px">Test Name</div><svg class="abs" style="left:1449px;top:493px" width="13" height="13"><use href="#us"/></svg><div class="td" style="left:1468px;top:494px">United States</div><div class="hl" style="left:190px;top:514px"></div>
<div class="cb" style="top:523px;height:13px"></div><div class="td lk" style="left:249px;top:524px">order</div><svg class="abs" style="left:342px;top:523px" width="13" height="13"><use href="#st"/></svg><div class="td" style="left:361px;top:524px">Submitted</div><div class="td dt" style="right:1076px;top:524px">04/02/2024</div><div class="td dt" style="left:545px;top:524px">04/02/2024</div><svg class="abs" style="left:633px;top:523px" width="13" height="13"><use href="#gear"/></svg><div class="td" style="left:651.500px;top:524px">Demo - Manual Store</div><div class="td dash" style="left:753px;top:524px">-</div><div class="td" style="left:859px;top:524px">California</div><svg class="abs" style="left:945px;top:523px" width="15" height="13"><use href="#pp"/></svg><div class="td dash" style="left:1033px;top:524px">-</div><div class="td dash" style="left:1245px;top:524px">-</div><svg class="abs" style="left:1288.500px;top:521.5px" width="12" height="14"><use href="#mk"/></svg><div class="td" style="left:1342.500px;top:524px">Joe Doe</div><svg class="abs" style="left:1449px;top:523px" width="13" height="13"><use href="#us"/></svg><div class="td" style="left:1468px;top:524px">United States</div><div class="td" style="left:1556px;top:524px">Like</div><div class="hl" style="left:190px;top:544px"></div>
<div class="cb" style="top:553px;height:13px"></div><div class="td lk" style="left:249px;top:554px">MostUsed-SM-E-U...</div><svg class="abs" style="left:342px;top:553px" width="13" height="13"><use href="#st"/></svg><div class="td" style="left:361px;top:554px">Submitted</div><div class="td dt" style="right:1076px;top:554px">04/01/2024</div><div class="td dt" style="left:545px;top:554px">04/01/2024</div><svg class="abs" style="left:633px;top:553px" width="13" height="13"><use href="#gear"/></svg><div class="td" style="left:651.500px;top:554px">Demo - Manual Store</div><div class="td dash" style="left:753px;top:554px">-</div><div class="td" style="left:859px;top:554px">Florida</div><svg class="abs" style="left:945px;top:553px" width="15" height="13"><use href="#pp"/></svg><div class="td dash" style="left:1033px;top:554px">-</div><div class="td dash" style="left:1245px;top:554px">-</div><svg class="abs" style="left:1288.500px;top:551.5px" width="12" height="14"><use href="#mk"/></svg><div class="td" style="left:1342.500px;top:554px">MostUsed 5.4%</div><svg class="abs" style="left:1449px;top:553px" width="13" height="13"><use href="#us"/></svg><div class="td" style="left:1468px;top:554px">United States</div><div class="td" style="left:1556px;top:554px">Company Inc.</div><div class="hl" style="left:190px;top:574px"></div>
<div class="cb" style="top:583px;height:13px"></div><div class="td lk" style="left:249px;top:584px">MostUsed-SM-E-U...</div><svg class="abs" style="left:342px;top:583px" width="13" height="13"><use href="#st"/></svg><div class="td" style="left:361px;top:584px">Submitted</div><div class="td dt" style="right:1076px;top:584px">04/01/2024</div><div class="td dt" style="left:545px;top:584px">04/01/2024</div><svg class="abs" style="left:633px;top:583px" width="13" height="13"><use href="#gear"/></svg><div class="td" style="left:651.500px;top:584px">Demo - Manual Store</div><div class="td dash" style="left:753px;top:584px">-</div><div class="td" style="left:859px;top:584px">Florida</div><svg class="abs" style="left:945px;top:583px" width="15" height="13"><use href="#pp"/></svg><div class="td dash" style="left:1033px;top:584px">-</div><div class="td dash" style="left:1245px;top:584px">-</div><svg class="abs" style="left:1288.500px;top:581.5px" width="12" height="14"><use href="#mk"/></svg><div class="td" style="left:1342.500px;top:584px">MostUsed 6%</div><svg class="abs" style="left:1449px;top:583px" width="13" height="13"><use href="#us"/></svg><div class="td" style="left:1468px;top:584px">United States</div><div class="td" style="left:1556px;top:584px">Company Inc.</div><div class="hl" style="left:190px;top:604px"></div>
<div class="cb" style="top:613px;height:13px"></div><div class="td lk" style="left:249px;top:614px">MostUsed-SM-EP-...</div><svg class="abs" style="left:342px;top:613px" width="13" height="13"><use href="#st"/></svg><div class="td" style="left:361px;top:614px">Submitted</div><div class="td dt" style="right:1076px;top:614px">04/01/2024</div><div class="td dt" style="left:545px;top:614px">04/01/2024</div><svg class="abs" style="left:633px;top:613px" width="13" height="13"><use href="#gear"/></svg><div class="td" style="left:651.500px;top:614px">Demo - Manual Store</div><div class="td dash" style="left:753px;top:614px">-</div><div class="td" style="left:859px;top:614px">Florida</div><svg class="abs" style="left:945px;top:613px" width="15" height="13"><use href="#pp"/></svg><div class="td dash" style="left:1033px;top:614px">-</div><div class="td dash" style="left:1245px;top:614px">-</div><svg class="abs" style="left:1288.500px;top:611.5px" width="12" height="14"><use href="#mk"/></svg><div class="td" style="left:1342.500px;top:614px">MostUsed 6.2%</div><svg class="abs" style="left:1449px;top:613px" width="13" height="13"><use href="#us"/></svg><div class="td" style="left:1468px;top:614px">United States</div><div class="td" style="left:1556px;top:614px">Company Inc.</div><div class="hl" style="left:190px;top:634px"></div>
<div class="cb" style="top:643px;height:13px"></div><div class="td lk" style="left:249px;top:644px">MostUsed-SM-S-U...</div><svg class="abs" style="left:342px;top:643px" width="13" height="13"><use href="#st"/></svg><div class="td" style="left:361px;top:644px">Submitted</div><div class="td dt" style="right:1076px;top:644px">04/01/2024</div><div class="td dt" style="left:545px;top:644px">04/01/2024</div><svg class="abs" style="left:633px;top:643px" width="13" height="13"><use href="#gear"/></svg><div class="td" style="left:651.500px;top:644px">Demo - Manual Store</div><div class="td dash" style="left:753px;top:644px">-</div><div class="td" style="left:859px;top:644px">Florida</div><svg class="abs" style="left:945px;top:643px" width="15" height="13"><use href="#pp"/></svg><div class="td dash" style="left:1033px;top:644px">-</div><div class="td dash" style="left:1245px;top:644px">-</div><svg class="abs" style="left:1288.500px;top:641.5px" width="12" height="14"><use href="#mk"/></svg><div class="td" style="left:1342.500px;top:644px">MostUsed 8.4%</div><svg class="abs" style="left:1449px;top:643px" width="13" height="13"><use href="#us"/></svg><div class="td" style="left:1468px;top:644px">United States</div><div class="td" style="left:1556px;top:644px">Company Inc.</div><div class="hl" style="left:190px;top:664px"></div>
<div class="cb" style="top:673px;height:13px"></div><div class="td lk" style="left:249px;top:674px">MostUsed-SM-E-U...</div><svg class="abs" style="left:342px;top:673px" width="13" height="13"><use href="#st"/></svg><div class="td" style="left:361px;top:674px">Submitted</div><div class="td dt" style="right:1076px;top:674px">04/01/2024</div><div class="td dt" style="left:545px;top:674px">04/01/2024</div><svg class="abs" style="left:633px;top:673px" width="13" height="13"><use href="#gear"/></svg><div class="td" style="left:651.500px;top:674px">Demo - Manual Store</div><div class="td dash" style="left:753px;top:674px">-</div><div class="td" style="left:859px;top:674px">California</div><svg class="abs" style="left:945px;top:673px" width="15" height="13"><use href="#pp"/></svg><div class="td dash" style="left:1033px;top:674px">-</div><div class="td dash" style="left:1245px;top:674px">-</div><svg class="abs" style="left:1288.500px;top:671.5px" width="12" height="14"><use href="#mk"/></svg><div class="td" style="left:1342.500px;top:674px">MostUsed 11%</div><svg class="abs" style="left:1449px;top:673px" width="13" height="13"><use href="#us"/></svg><div class="td" style="left:1468px;top:674px">United States</div><div class="td" style="left:1556px;top:674px">Company Inc.</div><div class="hl" style="left:190px;top:694px"></div>
<div class="cb" style="top:703px;height:13px"></div><div class="td lk" style="left:249px;top:704px">MostUsed-SM-E-P...</div><svg class="abs" style="left:342px;top:703px" width="13" height="13"><use href="#st"/></svg><div class="td" style="left:361px;top:704px">Submitted</div><div class="td dt" style="right:1076px;top:704px">04/01/2024</div><div class="td dt" style="left:545px;top:704px">04/01/2024</div><svg class="abs" style="left:633px;top:703px" width="13" height="13"><use href="#gear"/></svg><div class="td" style="left:651.500px;top:704px">Demo - Manual Store</div><div class="td dash" style="left:753px;top:704px">-</div><div class="td" style="left:859px;top:704px">Florida</div><svg class="abs" style="left:945px;top:703px" width="15" height="13"><use href="#pp"/></svg><div class="td dash" style="left:1033px;top:704px">-</div><div class="td dash" style="left:1245px;top:704px">-</div><svg class="abs" style="left:1288.500px;top:701.5px" width="12" height="14"><use href="#mk"/></svg><div class="td" style="left:1342.500px;top:704px">MostUsed 16%</div><svg class="abs" style="left:1449px;top:703px" width="13" height="13"><use href="#us"/></svg><div class="td" style="left:1468px;top:704px">United States</div><div class="td" style="left:1556px;top:704px">Company Inc.</div><div class="hl" style="left:190px;top:724px"></div>
<div class="cb" style="top:733px;height:13px"></div><div class="td lk" style="left:249px;top:734px">Passport-02</div><svg class="abs" style="left:342px;top:733px" width="13" height="13"><use href="#st"/></svg><div class="td" style="left:361px;top:734px">Submitted</div><div class="td dt" style="right:1076px;top:734px">04/01/2024</div><div class="td dt" style="left:545px;top:734px">04/01/2024</div><svg class="abs" style="left:633px;top:733px" width="13" height="13"><use href="#gear"/></svg><div class="td" style="left:651.500px;top:734px">Demo - Manual Store</div><div class="td dash" style="left:753px;top:734px">-</div><div class="td" style="left:859px;top:734px">Florida</div><svg class="abs" style="left:945px;top:733px" width="15" height="13"><use href="#pp"/></svg><div class="td dash" style="left:1033px;top:734px">-</div><div class="td dash" style="left:1245px;top:734px">-</div><svg class="abs" style="left:1288.500px;top:731.5px" width="12" height="14"><use href="#mk"/></svg><div class="td" style="left:1342.500px;top:734px">Jan Svacinka</div><svg class="abs" style="left:1449px;top:733px" width="13" height="13"><use href="#qa"/></svg><div class="td" style="left:1468px;top:734px">Qatar</div><div class="td" style="left:1556px;top:734px">Your Tires</div><div class="hl" style="left:190px;top:754px"></div>
<div class="cb" style="top:763px;height:13px"></div><div class="td lk" style="left:249px;top:764px">Passport-01</div><svg class="abs" style="left:342px;top:763px" width="13" height="13"><use href="#st"/></svg><div class="td" style="left:361px;top:764px">Submitted</div><div class="td dt" style="right:1076px;top:764px">04/01/2024</div><div class="td dt" style="left:545px;top:764px">04/01/2024</div><svg class="abs" style="left:633px;top:763px" width="13" height="13"><use href="#gear"/></svg><div class="td" style="left:651.500px;top:764px">Demo - Manual Store</div><div class="td dash" style="left:753px;top:764px">-</div><div class="td" style="left:859px;top:764px">Florida</div><svg class="abs" style="left:945px;top:763px" width="15" height="13"><use href="#pp"/></svg><div class="td dash" style="left:1033px;top:764px">-</div><div class="td dash" style="left:1245px;top:764px">-</div><svg class="abs" style="left:1288.500px;top:761.5px" width="12" height="14"><use href="#mk"/></svg><div class="td" style="left:1342.500px;top:764px">Alois Jirasek</div><svg class="abs" style="left:1449px;top:763px" width="13" height="13"><use href="#ca"/></svg><div class="td" style="left:1468px;top:764px">Canada</div><div class="td" style="left:1556px;top:764px">Books&amp;Stuff</div><div class="hl" style="left:190px;top:784px"></div>
<div class="cb" style="top:793px;height:13px"></div><div class="td lk" style="left:249px;top:794px">FL-PB-04</div><svg class="abs" style="left:342px;top:793px" width="13" height="13"><use href="#st"/></svg><div class="td" style="left:361px;top:794px">Submitted</div><div class="td dt" style="right:1076px;top:794px">04/01/2024</div><div class="td dt" style="left:545px;top:794px">04/01/2024</div><svg class="abs" style="left:633px;top:793px" width="13" height="13"><use href="#gear"/></svg><div class="td" style="left:651.500px;top:794px">Demo - Manual Store</div><div class="td dash" style="left:753px;top:794px">-</div><div class="td" style="left:859px;top:794px">Florida</div><svg class="abs" style="left:945px;top:793px" width="15" height="13"><use href="#pp"/></svg><div class="td dash" style="left:1033px;top:794px">-</div><div class="td dash" style="left:1245px;top:794px">-</div><svg class="abs" style="left:1288.500px;top:791.5px" width="12" height="14"><use href="#mk"/></svg><div class="td" style="left:1342.500px;top:794px">Alois J.</div><svg class="abs" style="left:1449px;top:793px" width="13" height="13"><use href="#us"/></svg><div class="td" style="left:1468px;top:794px">United States</div><div class="td" style="left:1556px;top:794px">Books&amp;Stuff</div><div class="hl" style="left:190px;top:814px"></div>
<div class="cb" style="top:823px;height:13px"></div><div class="td lk" style="left:249px;top:824px">FL-PB-03</div><svg class="abs" style="left:342px;top:823px" width="13" height="13"><use href="#st"/></svg><div class="td" style="left:361px;top:824px">Submitted</div><div class="td dt" style="right:1076px;top:824px">04/01/2024</div><div class="td dt" style="left:545px;top:824px">04/01/2024</div><svg class="abs" style="left:633px;top:823px" width="13" height="13"><use href="#gear"/></svg><div class="td" style="left:651.500px;top:824px">Demo - Manual Store</div><div class="td dash" style="left:753px;top:824px">-</div><div class="td" style="left:859px;top:824px">Florida</div><svg class="abs" style="left:945px;top:823px" width="15" height="13"><use href="#pp"/></svg><div class="td dash" style="left:1033px;top:824px">-</div><div class="td dash" style="left:1245px;top:824px">-</div><svg class="abs" style="left:1288.500px;top:821.5px" width="12" height="14"><use href="#mk"/></svg><div class="td" style="left:1342.500px;top:824px">Peter K.</div><svg class="abs" style="left:1449px;top:823px" width="13" height="13"><use href="#us"/></svg><div class="td" style="left:1468px;top:824px">United States</div><div class="td" style="left:1556px;top:824px">Logical Axiom</div><div class="hl" style="left:190px;top:844px"></div>
<div class="cb" style="top:853px;height:13px"></div><div class="td lk" style="left:249px;top:854px">CanadaInternatio...</div><svg class="abs" style="left:342px;top:853px" width="13" height="13"><use href="#st"/></svg><div class="td" style="left:361px;top:854px">Submitted</div><div class="td dt" style="right:1076px;top:854px">04/01/2024</div><div class="td dt" style="left:545px;top:854px">04/01/2024</div><svg class="abs" style="left:633px;top:853px" width="13" height="13"><use href="#gear"/></svg><div class="td" style="left:651.500px;top:854px">Demo - Manual Store</div><div class="td dash" style="left:753px;top:854px">-</div><div class="td" style="left:859px;top:854px">Toronto</div><svg class="abs" style="left:945px;top:853px" width="15" height="13"><use href="#pp"/></svg><div class="td dash" style="left:1033px;top:854px">-</div><div class="td dash" style="left:1245px;top:854px">-</div><svg class="abs" style="left:1288.500px;top:851.5px" width="12" height="14"><use href="#mk"/></svg><div class="td" style="left:1342.500px;top:854px">Alois Ji</div><svg class="abs" style="left:1449px;top:853px" width="13" height="13"><use href="#fi"/></svg><div class="td" style="left:1468px;top:854px">Finland</div><div class="td" style="left:1556px;top:854px">Books&amp;Stuff</div><div class="hl" style="left:190px;top:874px"></div>
<div class="cb" style="top:883px;height:13px"></div><div class="td lk" style="left:249px;top:884px">CanadaInternatio...</div><svg class="abs" style="left:342px;top:883px" width="13" height="13"><use href="#st"/></svg><div class="td" style="left:361px;top:884px">Submitted</div><div class="td dt" style="right:1076px;top:884px">04/01/2024</div><div class="td dt" style="left:545px;top:884px">04/01/2024</div><svg class="abs" style="left:633px;top:883px" width="13" height="13"><use href="#gear"/></svg><div class="td" style="left:651.500px;top:884px">Demo - Manual Store</div><div class="td dash" style="left:753px;top:884px">-</div><div class="td" style="left:859px;top:884px">Toronto</div><svg class="abs" style="left:945px;top:883px" width="15" height="13"><use href="#pp"/></svg><div class="td dash" style="left:1033px;top:884px">-</div><div class="td dash" style="left:1245px;top:884px">-</div><svg class="abs" style="left:1288.500px;top:881.5px" width="12" height="14"><use href="#mk"/></svg><div class="td" style="left:1342.500px;top:884px">Natala T.</div><svg class="abs" style="left:1449px;top:883px" width="13" height="13"><use href="#fr"/></svg><div class="td" style="left:1468px;top:884px">France</div><div class="td" style="left:1556px;top:884px">Books&amp;Stuff</div><div class="hl" style="left:190px;top:904px"></div>
</div>
</body></html>
